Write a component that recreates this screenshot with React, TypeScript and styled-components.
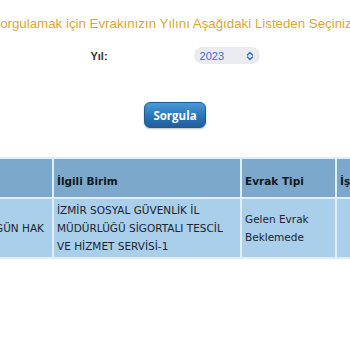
import styled, { createGlobalStyle } from "styled-components";

const GlobalStyle = createGlobalStyle`
  html, body {
    margin: 0;
    padding: 0;
    background: #ffffff;
    overflow: hidden;
  }
`;

const Page = styled.div`
  width: 350px;
  height: 350px;
  overflow: hidden;
  display: flex;
  flex-direction: column;
  align-items: center;
  font-family: "DejaVu Sans", Verdana, sans-serif;
`;

const Title = styled.div`
  margin-top: 15px;
  margin-right: 7px;
  height: 17px;
  white-space: nowrap;
  color: #dca92c;
  font-family: "Liberation Sans", Arial, sans-serif;
  font-size: 13.3px;
  line-height: 17px;
`;

const FormRow = styled.div`
  margin-top: 15px;
  display: flex;
  align-items: center;
  gap: 86px;
`;

const Label = styled.div`
  color: #333333;
  font-family: "Liberation Sans", Arial, sans-serif;
  font-weight: bold;
  font-size: 11px;
`;

const Select = styled.div`
  width: 66px;
  height: 17px;
  box-sizing: border-box;
  padding: 0 6px;
  border-radius: 9px;
  background: #e9ebf0;
  display: flex;
  align-items: center;
  justify-content: space-between;
  color: #3d6fce;
  font-family: "Liberation Sans", Arial, sans-serif;
  font-size: 11px;
`;

const ButtonRow = styled.div`
  margin-top: 38px;
  display: flex;
  justify-content: center;
`;

const Button = styled.button`
  width: 62px;
  height: 26px;
  border: 1px solid #1d5b93;
  border-radius: 6px;
  background: linear-gradient(#4a9ad6, #2a74b8 55%, #1f5f9c);
  box-shadow: 0 1px 2px rgba(0, 0, 0, 0.25);
  color: #ffffff;
  font-family: "Open Sans", "DejaVu Sans", sans-serif;
  font-weight: bold;
  font-size: 11.5px;
  padding: 0;
  cursor: pointer;
`;

const Grid = styled.div`
  margin-top: 29px;
  align-self: flex-start;
  width: 420px;
  display: grid;
  grid-template-columns: 52px 186px 93px 1fr;
  column-gap: 2px;
  row-gap: 2px;
  padding: 2px 0;
  background: #dfeef8;
`;

const HeadCell = styled.div`
  height: 38px;
  box-sizing: border-box;
  padding: 5px 3px 0;
  display: flex;
  align-items: center;
  background: #7ca8cb;
  color: #101820;
  font-weight: bold;
  font-size: 10.5px;
  white-space: nowrap;
  overflow: hidden;
`;

const BodyCell = styled.div<{ $right?: boolean }>`
  min-height: 58px;
  box-sizing: border-box;
  padding: 2px 3px;
  display: flex;
  align-items: center;
  justify-content: ${({ $right }) => ($right ? "flex-end" : "flex-start")};
  padding-right: ${({ $right }) => ($right ? "8px" : "3px")};
  background: #a9cfea;
  color: #1c2430;
  font-size: 10.5px;
  line-height: 18px;
  white-space: ${({ $right }) => ($right ? "nowrap" : "normal")};
  overflow: hidden;
`;

const Chevron = () => (
  <svg width="8" height="10" viewBox="0 0 8 10" fill="none">
    <path
      d="M1.5 4 L4 1.5 L6.5 4 M1.5 6 L4 8.5 L6.5 6"
      stroke="#3d6fce"
      strokeWidth="1.5"
      strokeLinecap="round"
      strokeLinejoin="round"
    />
  </svg>
);

export default function App() {
  return (
    <>
      <GlobalStyle />
      <Page>
        <Title>Sorgulamak için Evrakınızın Yılını Aşağıdaki Listeden Seçiniz</Title>
        <FormRow>
          <Label>Yıl:</Label>
          <Select>
            <span>2023</span>
            <Chevron />
          </Select>
        </FormRow>
        <ButtonRow>
          <Button>Sorgula</Button>
        </ButtonRow>
        <Grid>
          <HeadCell />
          <HeadCell>İlgili Birim</HeadCell>
          <HeadCell>Evrak Tipi</HeadCell>
          <HeadCell>İşlem</HeadCell>
          <BodyCell $right>GÜN HAK</BodyCell>
          <BodyCell>
            İZMİR SOSYAL GÜVENLİK İL MÜDÜRLÜĞÜ SİGORTALI TESCİL VE HİZMET SERVİSİ-1
          </BodyCell>
          <BodyCell>
            Gelen Evrak
            <br />
            Beklemede
          </BodyCell>
          <BodyCell />
        </Grid>
      </Page>
    </>
  );
}
